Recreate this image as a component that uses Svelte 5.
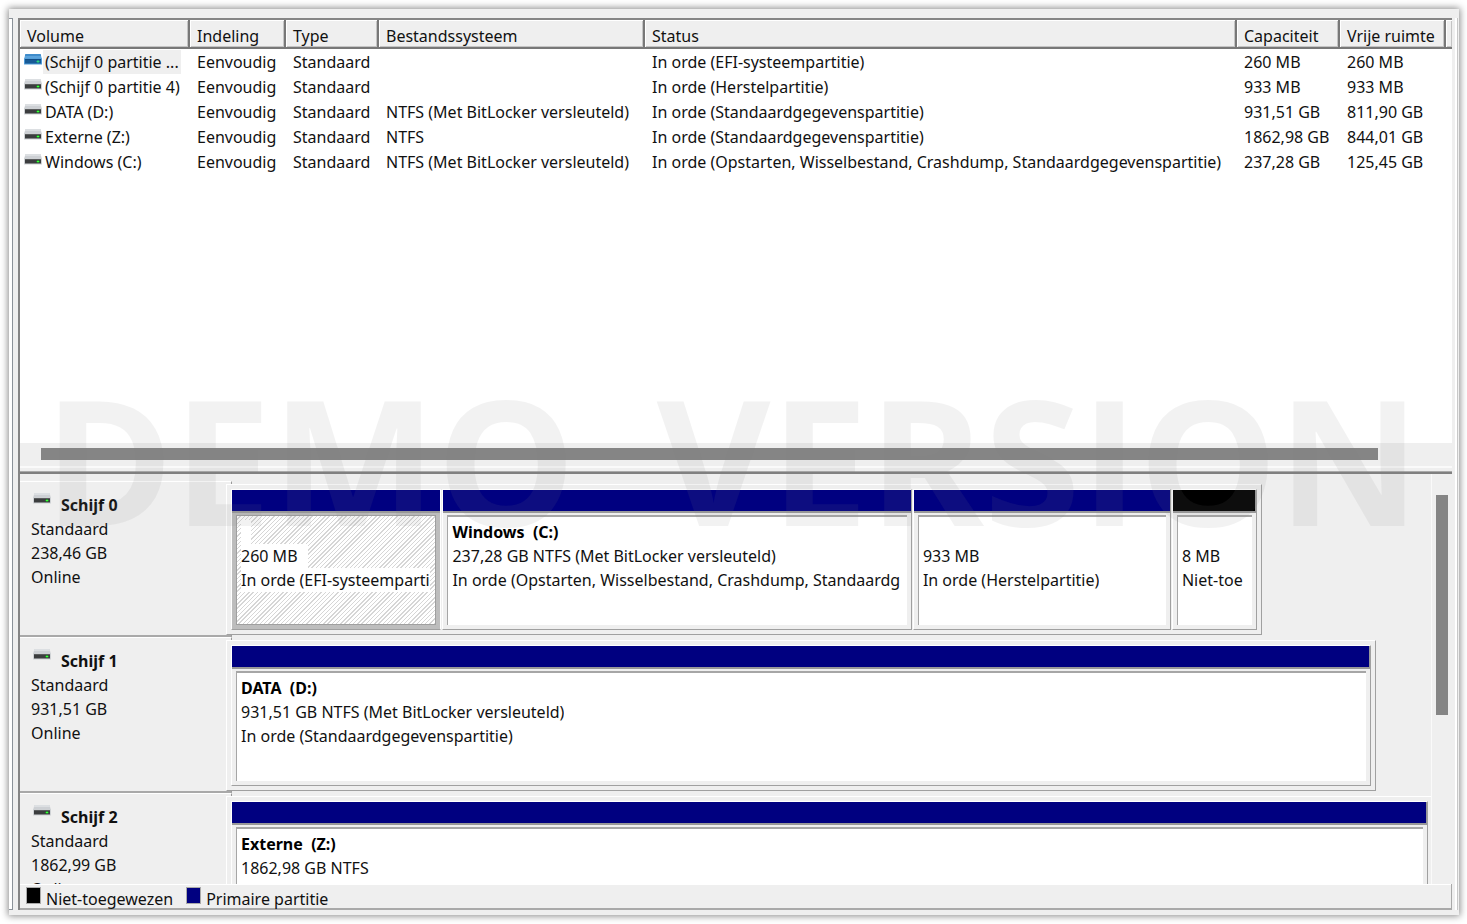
<script>
  const columns = ['Volume', 'Indeling', 'Type', 'Bestandssysteem', 'Status', 'Capaciteit', 'Vrije ruimte'];

  const volumes = [
    { name: '(Schijf 0 partitie ...', fs: '', status: 'In orde (EFI-systeempartitie)', size: '260 MB', free: '260 MB', selected: true },
    { name: '(Schijf 0 partitie 4)', fs: '', status: 'In orde (Herstelpartitie)', size: '933 MB', free: '933 MB' },
    { name: 'DATA (D:)', fs: 'NTFS (Met BitLocker versleuteld)', status: 'In orde (Standaardgegevenspartitie)', size: '931,51 GB', free: '811,90 GB' },
    { name: 'Externe (Z:)', fs: 'NTFS', status: 'In orde (Standaardgegevenspartitie)', size: '1862,98 GB', free: '844,01 GB' },
    { name: 'Windows (C:)', fs: 'NTFS (Met BitLocker versleuteld)', status: 'In orde (Opstarten, Wisselbestand, Crashdump, Standaardgegevenspartitie)', size: '237,28 GB', free: '125,45 GB' }
  ];

  const disks = [
    {
      name: 'Schijf 0', size: '238,46 GB', width: 86,
      parts: [
        { info: '260 MB', status: 'In orde (EFI-systeemparti', share: 210, selected: true },
        { name: 'Windows', letter: '(C:)', info: '237,28 GB NTFS (Met BitLocker versleuteld)', status: 'In orde (Opstarten, Wisselbestand, Crashdump, Standaardg', share: 471 },
        { info: '933 MB', status: 'In orde (Herstelpartitie)', share: 258 },
        { info: '8 MB', status: 'Niet-toe', share: 84, free: true }
      ]
    },
    {
      name: 'Schijf 1', size: '931,51 GB', width: 95.4,
      parts: [{ name: 'DATA', letter: '(D:)', info: '931,51 GB NTFS (Met BitLocker versleuteld)', status: 'In orde (Standaardgegevenspartitie)', share: 1 }]
    },
    {
      name: 'Schijf 2', size: '1862,99 GB', width: 100.2,
      parts: [{ name: 'Externe', letter: '(Z:)', info: '1862,98 GB NTFS', status: 'In orde (Standaardgegevenspartitie)', share: 1 }]
    }
  ];
</script>

{#snippet drive(blue)}
  <svg class="drive" viewBox="0 0 18 12" width="18" height="12" aria-hidden="true">
    <path d="M1.500 0h15l1.500 5H0z" fill={blue ? '#5ba3dc' : '#cdd0d4'} />
    <path d="M1.500 0h15l.6 2H.9z" fill={blue ? '#3f8ccb' : '#dcdfe2'} />
    <path d="M0 4.500h18v6H0z" fill={blue ? '#4f9ad6' : '#cfd2d5'} />
    <path d="M1 5h16v4.500H1z" fill={blue ? '#175a96' : '#3b3d3e'} />
    <path d="M1 5h16v1H1z" fill={blue ? '#0f4c85' : '#5a5c5d'} />
    <path d="M12 7h4v1h-4zM13 6h2v3h-2z" fill={blue ? '#1f9a80' : '#258c2b'} />
    <path d="M13 7h2v1h-2z" fill={blue ? '#2fd08a' : '#3dff3d'} />
  </svg>
{/snippet}

<div class="page">
  <div class="window">
    <div class="tree"></div>
    <main class="pane">
      <section class="list">
        <div class="tablewrap">
          <table>
            <colgroup>
              <col class="c1" /><col class="c2" /><col class="c3" /><col class="c4" /><col /><col class="c6" /><col class="c7" /><col class="c8" />
            </colgroup>
            <thead>
              <tr>
                {#each columns as c}<th scope="col">{c}</th>{/each}
                <td class="filler"></td>
              </tr>
            </thead>
            <tbody>
              {#each volumes as v}
                <tr>
                  <td class="volume">
                    <div>{@render drive(v.selected)}<span class:selected={v.selected}>{v.name}</span></div>
                  </td>
                  <td>Eenvoudig</td>
                  <td>Standaard</td>
                  <td>{v.fs}</td>
                  <td>{v.status}</td>
                  <td>{v.size}</td>
                  <td>{v.free}</td>
                  <td></td>
                </tr>
              {/each}
            </tbody>
          </table>
        </div>
        <div class="hscroll"><div class="thumb"></div></div>
      </section>

      <section class="graph">
        <div class="disks">
          {#each disks as d}
            <div class="disk">
              <div class="label">
                <h2>{@render drive(false)}<span>{d.name}</span></h2>
                <p>Standaard</p>
                <p>{d.size}</p>
                <p>Online</p>
              </div>
              <div class="track">
                <div class="frame" style:width="{d.width}%">
                  {#each d.parts as p}
                    <button type="button" class="part" class:selected={p.selected} class:free={p.free} style:flex-grow={p.share}>
                      <span class="bar"></span>
                      <span class="body">
                        <span class="inner">
                          <strong>{#if p.name}{p.name}&nbsp; {p.letter}{/if}</strong>
                          <span class="line">{p.info}</span>
                          <span class="line">{p.status}</span>
                        </span>
                      </span>
                    </button>
                  {/each}
                </div>
              </div>
            </div>
          {/each}
        </div>
        <div class="vscroll"><div class="thumb"></div></div>
      </section>

      <footer class="legend">
        <span class="swatch black"></span><span>Niet-toegewezen</span>
        <span class="swatch"></span><span>Primaire partitie</span>
      </footer>
    </main>
  </div>
  <div class="watermark"><span>DEMO</span><span>VERSION</span></div>
</div>

<style>
  :global(body) { margin: 0; background: #fff; }
  .page {
    position: relative;
    box-sizing: border-box;
    height: 100vh;
    padding: 9px 8px 9px 9px;
    font: 16px/24px "Noto Sans", "Open Sans", sans-serif;
    color: #111;
    overflow: hidden;
  }
  .window {
    display: flex;
    box-sizing: border-box;
    height: 100%;
    padding: 9px 4px 5px 0;
    background: #efefef;
    box-shadow: 0 0 7px 1px #8a8a8a;
  }
  .tree {
    flex: 0 0 3px;
    margin-right: 5px;
    background: #fff;
    border-top: 1px solid #8b9299;
    border-right: 1px solid #8b9299;
    border-bottom: 1px solid #8b9299;
  }
  .pane {
    flex: 1;
    min-width: 0;
    display: grid;
    grid-template-rows: minmax(0, 456fr) minmax(0, 410fr) 26px;
    border-left: 2px solid #858585;
    border-right: 3px solid #efefef;
    box-shadow: 2px 0 #fff, 3px 0 #c8c8c8;
  }
  .list {
    display: flex;
    flex-direction: column;
    border-top: 2px solid #858585;
    border-bottom: 2px solid #808080;
    background: #fff;
  }
  .tablewrap { flex: 1; min-height: 0; overflow: hidden; }
  table { width: 100%; table-layout: fixed; border-collapse: separate; border-spacing: 0; }
  .c1 { width: 170px; }
  .c2 { width: 96px; }
  .c3 { width: 93px; }
  .c4 { width: 266px; }
  .c6 { width: 103px; }
  .c7 { width: 106px; }
  .c8 { width: 6px; }
  th, .filler {
    box-sizing: border-box;
    height: 29px;
    padding: 5px 0 0 7px;
    background: #efefef;
    border: solid #787878;
    border-width: 0 2px 2px 0;
    box-shadow: inset 1px 1px #fff, inset -1px -1px #c4c4c4;
    text-align: left;
    font-weight: 400;
    line-height: 22px;
    white-space: nowrap;
  }
  .filler { border-right: 0; }
  tbody td { height: 25px; padding: 0 0 0 7px; white-space: nowrap; }
  tbody .volume { padding-left: 4px; }
  .volume div { display: flex; gap: 1px; }
  .volume .drive { margin-top: 4px; }
  .volume span { padding: 0 2px; }
  .volume .selected { background: #efefef; }
  .drive { flex: none; display: block; }
  .hscroll {
    height: 23px;
    padding: 5px 74px 0 21px;
    background: #efefef;
    border-bottom: 1px solid #aaa;
    box-shadow: inset 0 -3px #efefef, inset 0 -5px #fafafa;
  }
  .thumb { background: #858585; }
  .hscroll .thumb { height: 12px; }
  .graph { display: flex; min-height: 0; overflow: hidden; }
  .disks { flex: 1; min-width: 0; padding-top: 7px; border-right: 1px solid #fafafa; overflow: hidden; }
  .vscroll { flex: 0 0 20px; box-sizing: border-box; padding: 21px 4px 0; }
  .vscroll .thumb { height: 220px; }
  .disk { display: flex; height: 156px; box-sizing: border-box; }
  .label {
    flex: 0 0 212px;
    box-sizing: border-box;
    padding: 11px 0 0 11px;
    border-top: 1px solid #fff;
    border-bottom: 2px solid #a9a9a9;
    border-right: 1px dashed #999;
  }
  h2 { display: flex; gap: 10px; margin: 0; padding-left: 2px; font-size: 16px; line-height: 24px; }
  p { margin: 0; }
  .track { flex: 1; min-width: 0; padding-top: 3px; margin-left: -6px; position: relative; }
  .frame {
    display: flex;
    gap: 1px;
    box-sizing: border-box;
    height: 151px;
    padding: 4px;
    background: #efefef;
    border: 1px solid;
    border-color: #fff #a0a0a0 #a0a0a0 #fff;
  }
  .part {
    flex: 1 1 0;
    min-width: 0;
    display: flex;
    flex-direction: column;
    margin: 0;
    padding: 0;
    border: 1px solid;
    border-color: #fff #a0a0a0 #a0a0a0 #fff;
    background: #efefef;
    color: inherit;
    font: inherit;
    text-align: left;
  }
  .bar { height: 21px; flex: none; background: #000080; border-bottom: 2px solid #999; }
  .part:last-child .bar { border-right: 1px solid #999; }
  .free .bar { background: #000; }
  .body { flex: 1; display: flex; padding: 2px 4px 4px; min-height: 0; }
  .inner {
    flex: 1;
    min-width: 0;
    padding: 3px 4px 0 4px;
    overflow: hidden;
    background: #fff;
    border: solid #a6a6a6;
    border-width: 2px 0 0 1px;
  }
  .inner strong, .line { display: block; width: fit-content; max-width: 100%; overflow: hidden; white-space: nowrap; }
  .inner strong { height: 24px; color: #000; }
  .part.selected { border-right-color: #fff; }
  .selected .body { background: #bdbdbd; }
  .selected .inner {
    border: 1px solid #9f9f9f;
    padding: 4px 3px 0 4px;
    background: repeating-linear-gradient(135deg, #fff 0 2px, #d6d6d6 2px 3px);
  }
  .selected .line, .selected strong { background: #fff; }
  .selected strong { width: 10px; }
  .selected .line:nth-child(2) { padding-right: 10px; }
  .legend {
    display: flex;
    align-items: flex-start;
    box-sizing: border-box;
    padding: 3px 0 0 6px;
    border: solid #a9a9a9;
    border-width: 0 1px 2px 0;
    box-shadow: inset 0 1px #fff;
    line-height: 25px;
    white-space: nowrap;
  }
  .swatch { width: 13px; height: 15px; margin: 1px 6px 0 1px; background: #000080; outline: 1px solid #aaa; }
  .swatch.black { background: #000; }
  .legend span + .swatch { margin-left: 14px; }
  .watermark {
    position: absolute;
    top: 339px;
    left: 44px;
    right: 47px;
    display: flex;
    justify-content: space-between;
    font-family: "Open Sans", sans-serif;
    font-size: 175px;
    line-height: 238px;
    font-weight: 700;
    color: rgb(128 128 128 / 10%);
    pointer-events: none;
  }
</style>
